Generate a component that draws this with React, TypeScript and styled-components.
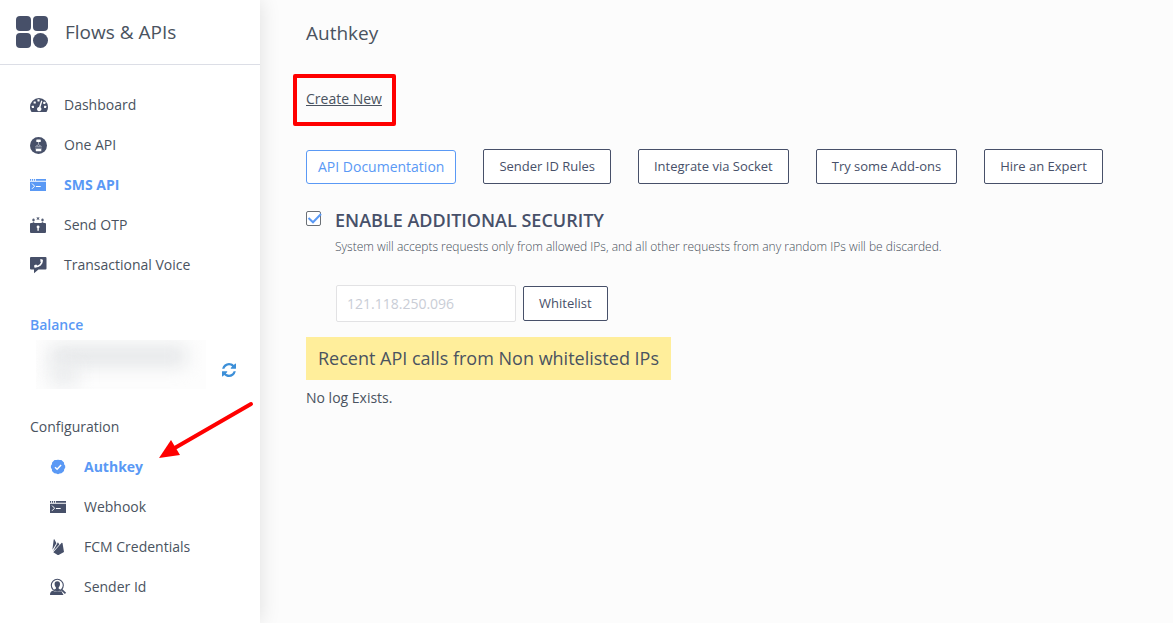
import React, { useState } from "react";
import styled, { createGlobalStyle, css } from "styled-components";

const colors = {
  ink: "#475069",
  text: "#4a5360",
  blue: "#5a99f5",
  page: "#fcfcfc",
  line: "#dcdee6",
  red: "#ff0000",
};

const GlobalStyle = createGlobalStyle`
  *, *::before, *::after { box-sizing: border-box; }
  body {
    margin: 0;
    background: ${colors.page};
    color: ${colors.text};
    font-family: "Open Sans", sans-serif;
    font-size: 14px;
    line-height: 20px;
  }
  h1, h2, h3, p, ul { margin: 0; padding: 0; font-weight: 400; }
  ul { list-style: none; }
  button, input { font-family: inherit; color: inherit; }
`;

const Page = styled.div`
  display: flex;
  min-height: 100vh;
`;

const Sidebar = styled.aside`
  flex: 0 0 260px;
  background: #fff;
  box-shadow: 0 0 20px rgba(0, 0, 0, 0.12);
`;

const Brand = styled.header`
  display: flex;
  align-items: center;
  gap: 17px;
  height: 65px;
  padding-left: 16px;
  border-bottom: 1px solid ${colors.line};
  color: ${colors.ink};
`;

const BrandName = styled.span`
  font-size: 19px;
  line-height: 28px;
  color: ${colors.text};
`;

const NavList = styled.ul<{ $nested?: boolean }>`
  padding-left: ${(p) => (p.$nested ? 50 : 30)}px;
`;

const MainNav = styled.nav`
  padding-top: 20px;
`;

const NavLink = styled.a<{ $active?: boolean }>`
  display: flex;
  align-items: center;
  gap: 16px;
  height: 40px;
  color: ${colors.text};
  text-decoration: none;
  svg { color: ${colors.ink}; }
  ${(p) =>
    p.$active &&
    css`
      color: ${colors.blue};
      font-weight: 700;
      svg { color: ${colors.blue}; }
    `}
`;

const Section = styled.section`
  padding-top: 30px;
`;

const SectionTitle = styled.h2<{ $accent?: boolean }>`
  padding-left: 30px;
  font-size: 14px;
  line-height: 20px;
  ${(p) => p.$accent && css`color: ${colors.blue}; font-weight: 600;`}
`;

const BalanceRow = styled.div`
  display: flex;
  align-items: center;
  gap: 16px;
  padding: 5px 22px 0 36px;
`;

const Redacted = styled.div`
  width: 170px;
  height: 49px;
  padding: 6px 20px 0 14px;
  overflow: hidden;
  background: #fdfdfd;
  &::before, &::after {
    content: "";
    display: block;
    height: 20px;
    background: #e4e6e8;
    filter: blur(9px);
  }
  &::after { width: 28px; height: 18px; background: #e8eaec; }
`;

const IconButton = styled.button`
  display: flex;
  padding: 0;
  margin-top: 10px;
  border: 0;
  background: none;
  color: #3c8fd8;
  cursor: pointer;
`;

const ConfigSection = styled.section`
  position: relative;
  padding-top: 28px;
`;

const Arrow = styled.svg`
  position: absolute;
  left: 156px;
  top: 8px;
`;

const ConfigNav = styled.nav`
  padding-top: 10px;
`;

const Main = styled.main`
  flex: 1;
  min-width: 0;
  padding: 20px 24px 24px 46px;
`;

const Title = styled.h1`
  font-size: 19px;
  line-height: 26px;
`;

const CreateRow = styled.div`
  display: flex;
  padding-top: 43px;
`;

const Marked = styled.div`
  position: relative;
  &::after {
    content: "";
    position: absolute;
    inset: -15px -14px -17px -13px;
    border: 4px solid ${colors.red};
    border-radius: 2px;
    pointer-events: none;
  }
`;

const CreateLink = styled.a`
  display: block;
  color: ${colors.text};
  text-underline-offset: 1px;
`;

const Actions = styled.div`
  display: flex;
  flex-wrap: wrap;
  align-items: center;
  gap: 27px;
  padding-top: 40px;
`;

const Button = styled.button<{ $accent?: boolean }>`
  height: 35px;
  padding: 0 15px 2px;
  border: 1px solid ${colors.ink};
  border-radius: 2px;
  background: #fff;
  font-size: 13px;
  line-height: 20px;
  color: ${colors.ink};
  white-space: nowrap;
  cursor: pointer;
  ${(p) =>
    p.$accent &&
    css`
      height: 34px;
      padding: 0 11px;
      border-color: ${colors.blue};
      border-radius: 3px;
      font-size: 14px;
      color: ${colors.blue};
    `}
`;

const Security = styled.section`
  display: grid;
  grid-template-columns: 15px 1fr;
  column-gap: 14px;
  padding-top: 22px;
`;

const CheckWrap = styled.span`
  display: grid;
  height: 15px;
  margin-top: 5px;
  > * { grid-area: 1 / 1; }
  svg { pointer-events: none; z-index: 1; }
`;

const Checkbox = styled.input`
  appearance: none;
  width: 15px;
  height: 15px;
  margin: 0;
  border: 1px solid #6b7076;
  border-radius: 2px;
  background: #fff;
`;

const SecurityLabel = styled.label`
  display: block;
  font-size: 18px;
  line-height: 28px;
  font-weight: 600;
  color: ${colors.ink};
`;

const Hint = styled.p`
  padding-top: 4px;
  font-size: 12px;
  line-height: 18px;
  font-weight: 300;
  color: #454c58;
`;

const WhitelistForm = styled.form`
  display: flex;
  align-items: center;
  gap: 7px;
  padding: 29px 0 15px 1px;
`;

const IpInput = styled.input`
  width: 180px;
  height: 37px;
  padding: 0 10px;
  border: 1px solid #e2e2e4;
  border-radius: 2px;
  background: #fff;
  font-size: 14px;
  &::placeholder { color: #c9cdd6; opacity: 1; }
`;

const Notice = styled.h3`
  width: fit-content;
  padding: 7px 12px 8px;
  background: #ffee9b;
  font-size: 18px;
  line-height: 28px;
`;

const Log = styled.p`
  padding-top: 8px;
`;

const Icon = ({ size = 18, box = 18, children }: { size?: number; box?: number; children: React.ReactNode }) => (
  <svg width={size} height={size} viewBox={`0 0 ${box} ${box}`} fill="currentColor" aria-hidden="true">
    {children}
  </svg>
);

const DashboardIcon = () => (
  <Icon>
    <path d="M1.500 16C.6 14.500 0 12.900 0 11a9 9 0 0 1 18 0c0 1.900-.6 3.500-1.500 5z" />
    <g fill="#fff">
      <rect x="1.800" y="9.800" width="2.200" height="2.200" rx=".4" />
      <rect x="3.600" y="5.400" width="2.200" height="2.200" rx=".4" />
      <rect x="7.400" y="3.200" width="2.200" height="2.200" rx=".4" />
      <rect x="13.200" y="5.800" width="2.200" height="2.200" rx=".4" />
      <rect x="14" y="9.800" width="2.200" height="2.200" rx=".4" />
      <path d="M11.200 4.600l1.200.4-1.900 6.300a2.200 2.200 0 1 1-1.500-.4z" />
    </g>
  </Icon>
);

const OneApiIcon = () => (
  <Icon>
    <circle cx="8.500" cy="9.500" r="8.500" />
    <g fill="#fff">
      <rect x="6.300" y="3.500" width="4.500" height="2.500" rx=".4" />
      <rect x="5.800" y="13" width="5.500" height="2.300" rx=".4" />
    </g>
    <path d="M8.500 6v2M5.300 10.800l3.200-2.300 3.200 2.300M6.500 10.300h4M5.300 12.200h6.400" fill="none" stroke="#b9bec9" strokeWidth=".8" />
  </Icon>
);

const TerminalIcon = () => (
  <Icon>
    <path d="M0 3h1.200v1.700H0zM2 3h1.200v1.700H2zM4 3h1.200v1.700H4zM6 3h10v1.700H6zM0 5.700h16V15H0z" />
    <path d="M2 7.500l2.600 2.700L2 12.800M6 10.500h4.700" fill="none" stroke="#fff" strokeWidth="1" />
  </Icon>
);

const OtpIcon = () => (
  <Icon>
    <path d="M1 7h1.700v-.8h1.600V7h7.400v-.8h1.600V7H15a1 1 0 0 1 1 1v8a1 1 0 0 1-1 1H1a1 1 0 0 1-1-1V8a1 1 0 0 1 1-1z" />
    <path d="M8 1v3M6.700 1.700l2.600 1.600M9.300 1.700L6.700 3.300M3.500 2.500v3M2.200 3.200l2.600 1.600M4.800 3.200L2.200 4.800M12.500 2.500v3M11.200 3.200l2.600 1.600M13.800 3.200l-2.600 1.600" stroke="currentColor" strokeWidth=".8" />
    <path d="M8 9.400a1.500 1.500 0 0 1 .8 2.800v2.600H7.400v-2.600A1.500 1.500 0 0 1 8 9.400z" fill="#fff" />
  </Icon>
);

const VoiceIcon = () => (
  <Icon>
    <path d="M1 1h14.500a1 1 0 0 1 1 1v10.500a1 1 0 0 1-1 1H8.500L4 17.200v-3.700H1a1 1 0 0 1-1-1V2a1 1 0 0 1 1-1z" />
    <path d="M12 4c.6 3.800-2.800 7-7.300 6.700" fill="none" stroke="#fff" strokeWidth="1.500" />
    <path d="M10.300 3l2.300.4.2 2-2.300.5zM4.200 9.300l2-.9 1.300 1.500-1 1.400-2.100.1z" fill="#fff" />
  </Icon>
);

const VerifiedIcon = () => (
  <Icon>
    <path d="M8 1.800l1.700.2h1.700l1.300 1.300 1.300 1.200.1 1.700 1.100 1.500v2l-1 1.500-.2 1.700-1.300 1.300-1.300 1.100-1.700.2-1.700.8-1.800-.8-1.800-.2-1.200-1.100-1.200-1.300-.1-1.700-1-1.500v-2l1-1.500.2-1.700 1.200-1.200L4.500 2h1.800z" />
    <path d="M5 9.200l2.100 2 4-4.200" fill="none" stroke="#fff" strokeWidth="1.500" />
  </Icon>
);

const FirebaseIcon = () => (
  <Icon>
    <path d="M2.400 11.800L3.700 1.400l.7-.2 2 4zM3 13.300L7.900 4.200l1.500 2.200zM3.300 14.200L11.700 4.800l.8.3L14 14l-5.400 3h-.9z" />
  </Icon>
);

const SenderIcon = () => (
  <Icon>
    <circle cx="7.300" cy="7.300" r="6" fill="none" stroke="currentColor" strokeWidth="1.100" />
    <path d="M7.300 3.200c2 0 2.800 1.300 2.700 3-.1 1.400-.6 2.300-1.300 3v1.600l2.600 1.200c-2.500 1.500-5.500 1.500-8 0l2.600-1.200V9.200c-.7-.7-1.200-1.600-1.300-3-.1-1.700.7-3 2.700-3z" />
    <path d="M0 17c0-2.400.8-3.600 2.800-4.200 2.800 1.600 6 1.700 8.500.2l2.200 4z" />
    <path d="M11.300 11.300l4.200 4" stroke="currentColor" strokeWidth="1.800" />
  </Icon>
);

const RefreshIcon = () => (
  <Icon size={14} box={1536}>
    <path d="M1511 928q0 5-1 7-64 268-268 434.500T764 1536q-146 0-282.500-55T238 1324l-129 129q-19 19-45 19t-45-19-19-45V960q0-26 19-45t45-19h448q26 0 45 19t19 45-19 45l-137 137q71 66 161 102t187 36q134 0 250-65t186-179q11-17 53-117 8-23 30-23h192q13 0 22.500 9.500t9.500 22.500zm25-800v448q0 26-19 45t-45 19h-448q-26 0-45-19t-19-45 19-45l138-138Q969 256 768 256q-134 0-250 65T332 500q-11 17-53 117-8 23-30 23H50q-13 0-22.500-9.500T18 608v-7q65-268 270-434.500T768 0q146 0 284 55.500T1297 212l130-129q19-19 45-19t45 19 19 45z" />
  </Icon>
);

const LogoIcon = () => (
  <Icon size={32} box={32}>
    <rect width="15" height="15" rx="4" />
    <rect x="17" width="15" height="15" rx="4" />
    <rect y="17" width="15" height="15" rx="4" />
    <circle cx="24.500" cy="24.500" r="7.500" />
  </Icon>
);

type Item = { label: string; icon: React.ReactNode; active?: boolean };

const mainItems: Item[] = [
  { label: "Dashboard", icon: <DashboardIcon /> },
  { label: "One API", icon: <OneApiIcon /> },
  { label: "SMS API", icon: <TerminalIcon />, active: true },
  { label: "Send OTP", icon: <OtpIcon /> },
  { label: "Transactional Voice", icon: <VoiceIcon /> },
];

const configItems: Item[] = [
  { label: "Authkey", icon: <VerifiedIcon />, active: true },
  { label: "Webhook", icon: <TerminalIcon /> },
  { label: "FCM Credentials", icon: <FirebaseIcon /> },
  { label: "Sender Id", icon: <SenderIcon /> },
];

const Nav = ({ items, nested }: { items: Item[]; nested?: boolean }) => (
  <NavList $nested={nested}>
    {items.map((item) => (
      <li key={item.label}>
        <NavLink href="#" $active={item.active}>
          {item.icon}
          {item.label}
        </NavLink>
      </li>
    ))}
  </NavList>
);

export default function App() {
  const [enabled, setEnabled] = useState(true);

  return (
    <>
      <GlobalStyle />
      <Page>
        <Sidebar>
          <Brand>
            <LogoIcon />
            <BrandName>Flows &amp; APIs</BrandName>
          </Brand>
          <MainNav>
            <Nav items={mainItems} />
          </MainNav>
          <Section>
            <SectionTitle $accent>Balance</SectionTitle>
            <BalanceRow>
              <Redacted />
              <IconButton type="button" aria-label="Refresh balance">
                <RefreshIcon />
              </IconButton>
            </BalanceRow>
          </Section>
          <ConfigSection>
            <SectionTitle>Configuration</SectionTitle>
            <ConfigNav>
              <Nav items={configItems} nested />
            </ConfigNav>
            <Arrow width="100" height="64" viewBox="0 0 100 64" aria-hidden="true">
              <path d="M95 7L17 52" stroke={colors.red} strokeWidth="4" strokeLinecap="round" />
              <path d="M3 61l12-18 9 15z" fill={colors.red} />
            </Arrow>
          </ConfigSection>
        </Sidebar>
        <Main>
          <Title>Authkey</Title>
          <CreateRow>
            <Marked>
              <CreateLink href="#">Create New</CreateLink>
            </Marked>
          </CreateRow>
          <Actions>
            <Button type="button" $accent>API Documentation</Button>
            <Button type="button">Sender ID Rules</Button>
            <Button type="button">Integrate via Socket</Button>
            <Button type="button">Try some Add-ons</Button>
            <Button type="button">Hire an Expert</Button>
          </Actions>
          <Security>
            <CheckWrap>
              <Checkbox
                id="security"
                type="checkbox"
                checked={enabled}
                onChange={(e) => setEnabled(e.target.checked)}
              />
              {enabled && (
                <svg width="16" height="15" viewBox="0 0 16 15" aria-hidden="true">
                  <path d="M2.500 7l4.500 4.300L15 3" fill="none" stroke={colors.blue} strokeWidth="2" />
                </svg>
              )}
            </CheckWrap>
            <div>
              <SecurityLabel htmlFor="security">ENABLE ADDITIONAL SECURITY</SecurityLabel>
              <Hint>
                System will accepts requests only from allowed IPs, and all other requests from any random IPs will be
                discarded.
              </Hint>
              <WhitelistForm onSubmit={(e) => e.preventDefault()}>
                <IpInput type="text" placeholder="121.118.250.096" aria-label="IP address" />
                <Button type="submit">Whitelist</Button>
              </WhitelistForm>
            </div>
          </Security>
          <Notice>Recent API calls from Non whitelisted IPs</Notice>
          <Log>No log Exists.</Log>
        </Main>
      </Page>
    </>
  );
}
